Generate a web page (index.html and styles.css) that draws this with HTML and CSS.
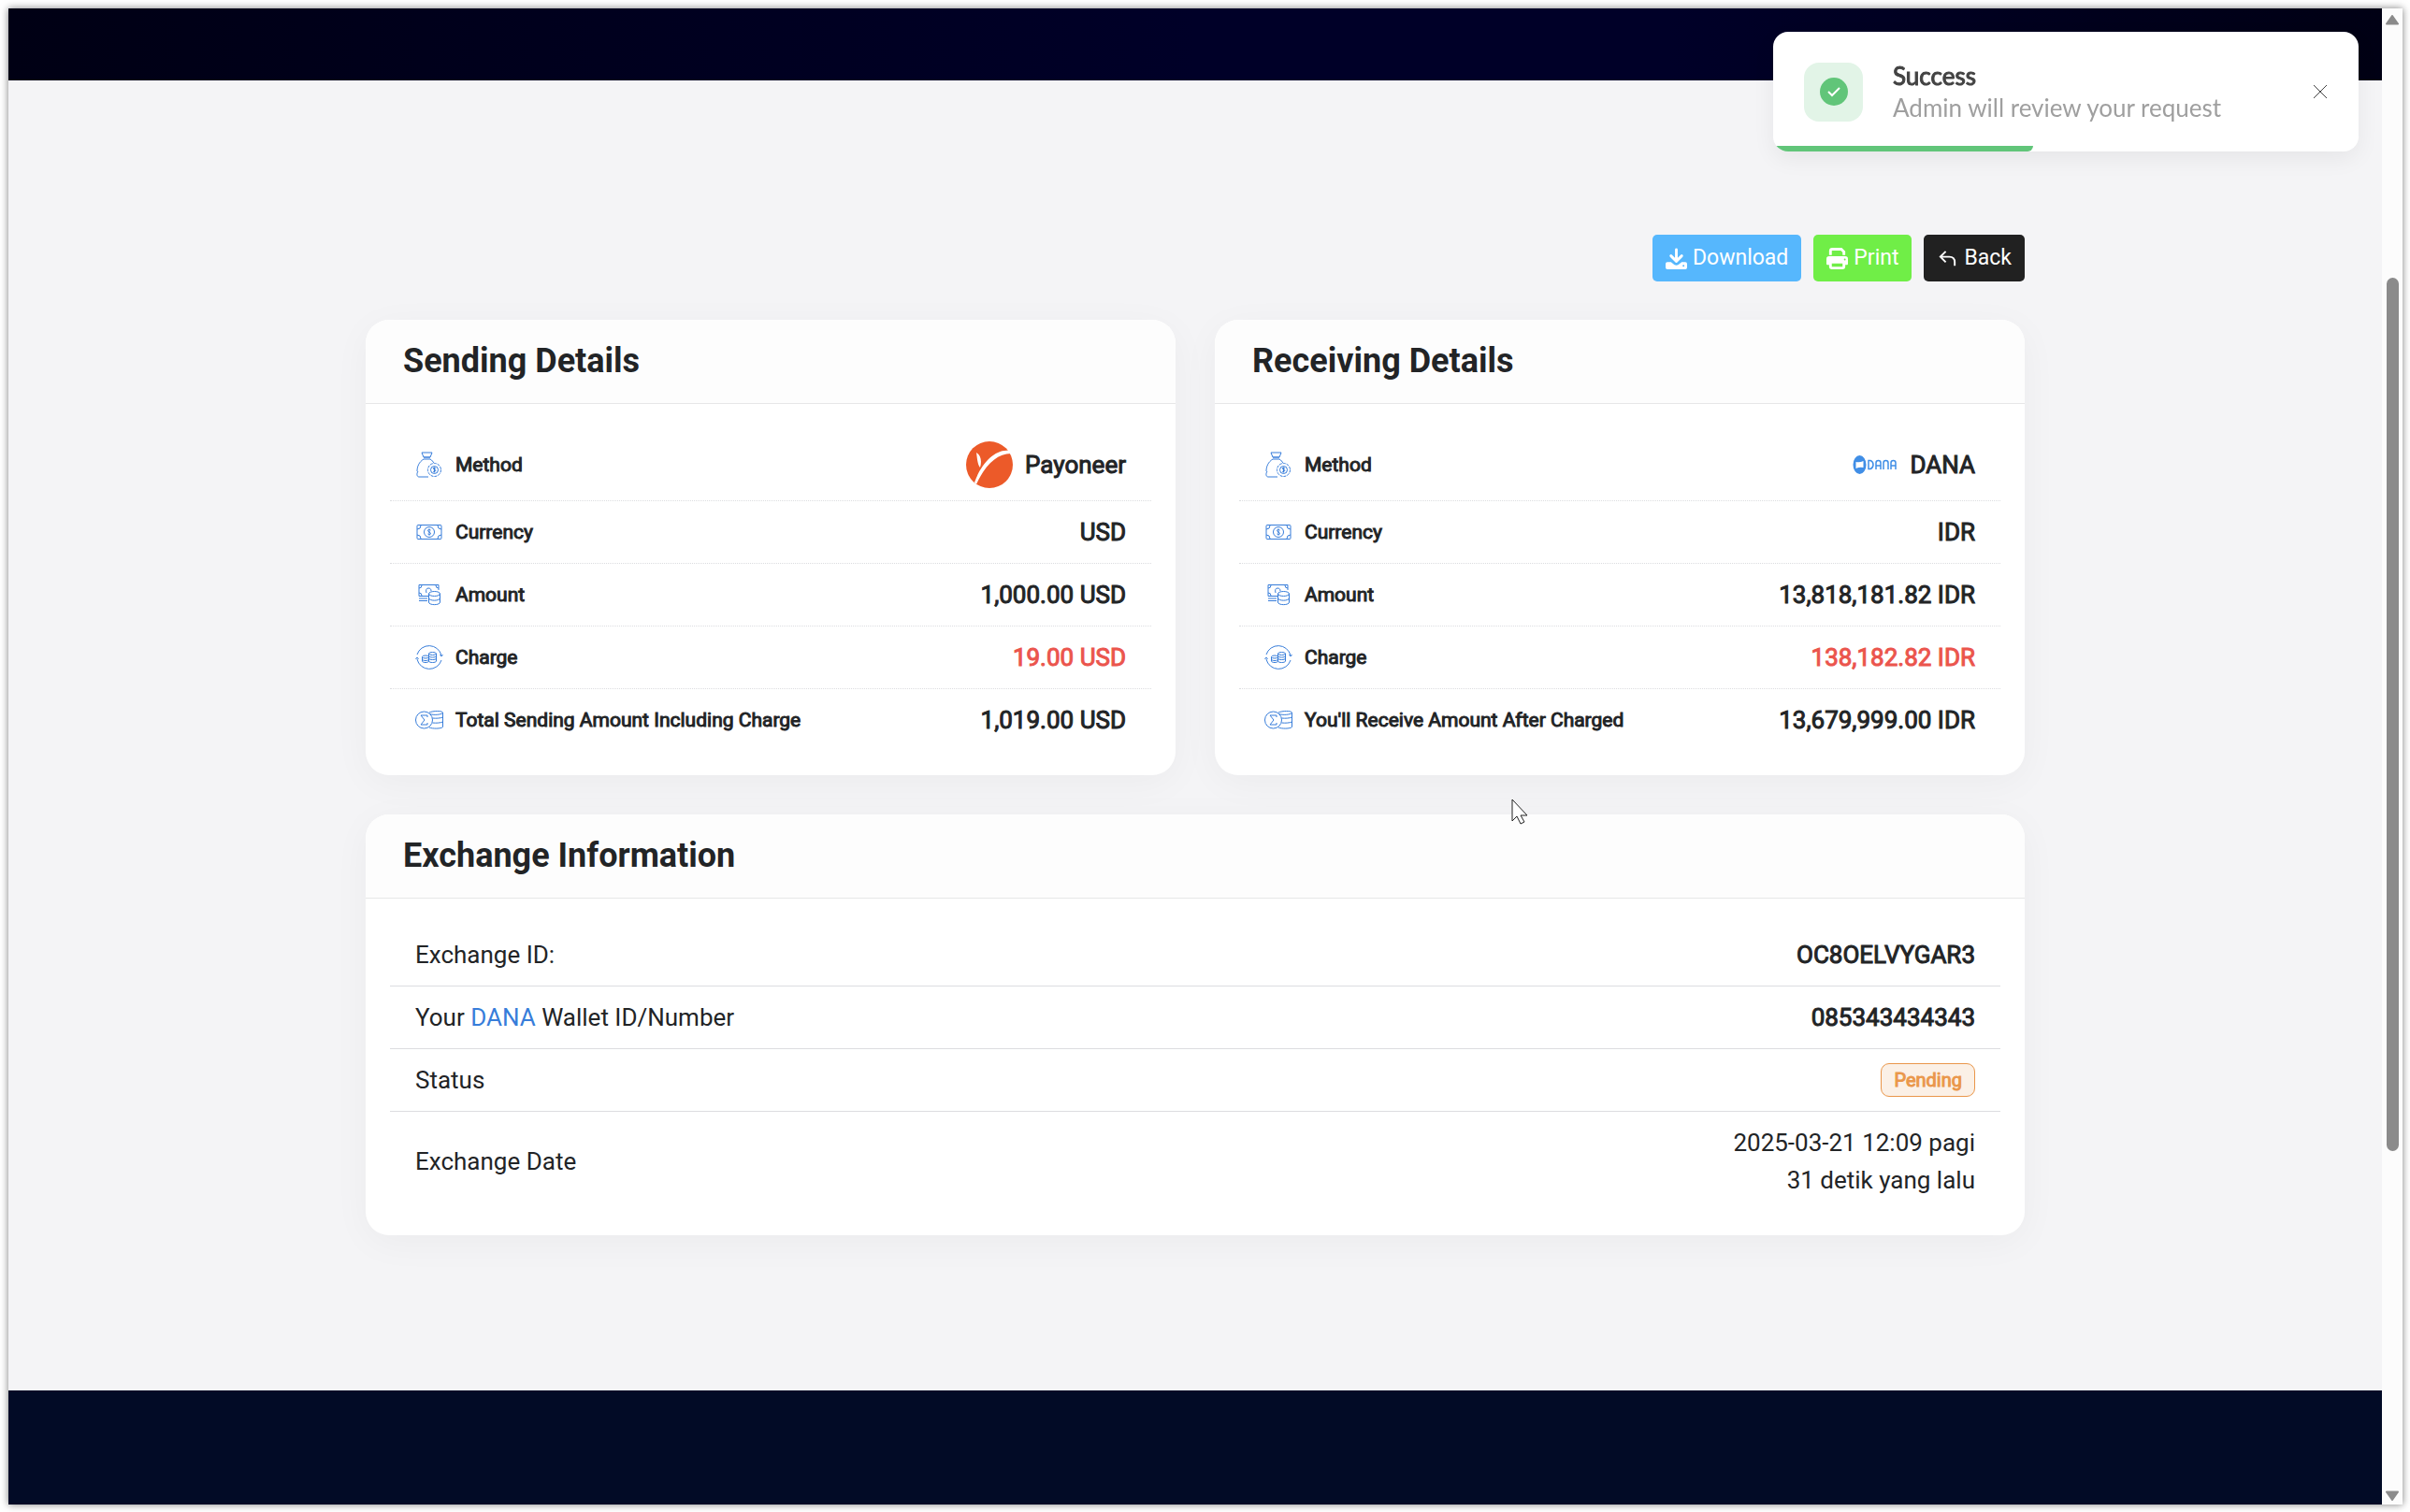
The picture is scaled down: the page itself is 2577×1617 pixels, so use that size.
FILE: index.html
```html
<!DOCTYPE html>
<html lang="en">
<head>
  <meta charset="UTF-8">
  <meta name="viewport" content="width=device-width, initial-scale=1.0">
  <title>Exchange Details</title>
  <link rel="stylesheet" href="styles.css">
</head>
<body>
  <!-- icons shared by both detail cards -->
  <svg class="sprite" aria-hidden="true">
    <symbol id="i-method" viewBox="0 0 30 30">
      <path d="M7 2h11l-2 5H9zM9 7h7M9 9h7M9 9C4 12 2 17 2 22M16 9c2 1 3 3 4 4M3 22c-2 3-1 6 1 6h10"/>
      <circle cx="20.500" cy="20.500" r="7" stroke-dasharray="3 1"/>
      <circle cx="20.500" cy="20.500" r="4"/>
      <path d="M22 19c-1-1-3-1-3 0s3 1 3 2-2 2-3 1M20.500 17.500v6"/>
    </symbol>
    <symbol id="i-currency" viewBox="0 0 30 30">
      <rect x="2" y="7.500" width="26" height="15" rx="1"/>
      <circle cx="15" cy="15" r="5.500"/>
      <path d="M16.500 13c-1-1-3-1-3 .500s3 1.500 3 3-2 1.500-3 .500M15 11.500v7M2 12q4 0 4-4M28 12q-4 0-4-4M2 18q4 0 4 4M28 18q-4 0-4 4"/>
    </symbol>
    <symbol id="i-amount" viewBox="0 0 30 30">
      <path d="M14 16.500H4v-12h21V10M4 8q3 0 3-3M25 8q-3 0-3-3M4 13q3 0 3 3M12 13c-1-3 0-5 2-5s3 1 3 3M4 19h9M4 21.500h9"/>
      <ellipse cx="20.500" cy="14" rx="6" ry="2.500"/>
      <path d="M14.500 14v9c0 3.500 12 3.500 12 0v-9M14.500 18.500c0 3.500 12 3.500 12 0"/>
    </symbol>
    <symbol id="i-charge" viewBox="0 0 30 30">
      <path d="M2 12a13.500 13.500 0 0 1 26 1M28 18a13.500 13.500 0 0 1-26-1M26.500 12l1.500 2 1.500-2M.500 17L2 15l1.500 2"/>
      <ellipse cx="18.500" cy="11" rx="4" ry="1.500"/>
      <path d="M14.500 11v8c0 2 8 2 8 0v-8M14.500 13.500c0 2 8 2 8 0M14.500 16c0 2 8 2 8 0"/>
      <ellipse cx="11" cy="14.500" rx="3.500" ry="1.500"/>
      <path d="M7.500 14.500v4.500c0 2 7 2 7 0M7.500 17c0 2 7 2 7 0"/>
    </symbol>
    <symbol id="i-total" viewBox="0 0 30 30">
      <circle cx="9.500" cy="15" r="9"/>
      <path d="M13 12v-2H6l4 5-4 5h7v-2M15 7c4-2 14-2 14.500 0v15.500c-2 2-11 2-14.500.500M15.500 8.500c4 1.500 12 1 14-1M18.500 13c4 .500 9 0 11-1M18.500 18c4 .500 9 0 11-1"/>
    </symbol>
  </svg>

  <div class="window">
    <div class="page">
      <header class="top-bar"></header>

      <main class="content">
        <div class="container">
          <div class="actions">
            <button class="btn btn-download" type="button">
              <svg class="btn-icon" viewBox="0 0 24 24"><path d="M12 2v12M6 9l6 6 6-6" fill="none" stroke="#fff" stroke-width="3" stroke-linecap="round" stroke-linejoin="round"/><path d="M2 16h4l4 3q2 1 4 0l4-3h4q2 0 2 2v4q0 2-2 2H2q-2 0-2-2v-4q0-2 2-2z" fill="#fff"/><circle cx="20" cy="20" r="1" fill="#56b7fd"/></svg>
              Download
            </button>
            <button class="btn btn-print" type="button">
              <svg class="btn-icon" viewBox="0 0 24 24"><path d="M4.500 8V3.500q0-2 2-2h10l3 3V8" fill="none" stroke="#fff" stroke-width="3"/><path d="M3 9.500h18q3 0 3 3V18q0 1-1 1H1q-1 0-1-1v-5.500q0-3 3-3z" fill="#fff"/><rect x="4.500" y="16" width="15" height="6.500" rx="1" fill="#70ee47" stroke="#fff" stroke-width="3"/><circle cx="20.500" cy="13" r="1" fill="#70ee47"/></svg>
              Print
            </button>
            <a class="btn btn-back" href="#">
              <svg class="btn-icon" viewBox="0 0 24 24"><path d="M10 4L4 10l6 6M4 10h10q6 0 6 6v4" fill="none" stroke="#fff" stroke-width="2"/></svg>
              Back
            </a>
          </div>

          <div class="cards">
            <section class="card">
              <h2 class="card-header">Sending Details</h2>
              <ul class="list list-dotted">
                <li><span class="label"><svg class="icon"><use href="#i-method"/></svg>Method</span>
                  <span class="value value-method">
                    <svg class="logo" viewBox="0 0 50 50"><circle cx="25" cy="25" r="25" fill="#ec5a29"/><path d="M9 44C16 24 31 8 46 10l2 3C33 13 20 26 11 46zM11 12c5 3 6 9 4 16-3-4-3-10-4-16z" fill="#fff"/></svg>
                    Payoneer</span></li>
                <li><span class="label"><svg class="icon"><use href="#i-currency"/></svg>Currency</span><span class="value">USD</span></li>
                <li><span class="label"><svg class="icon"><use href="#i-amount"/></svg>Amount</span><span class="value">1,000.00 USD</span></li>
                <li><span class="label"><svg class="icon"><use href="#i-charge"/></svg>Charge</span><span class="value danger">19.00 USD</span></li>
                <li><span class="label"><svg class="icon"><use href="#i-total"/></svg>Total Sending Amount Including Charge</span><span class="value">1,019.00 USD</span></li>
              </ul>
            </section>

            <section class="card">
              <h2 class="card-header">Receiving Details</h2>
              <ul class="list list-dotted">
                <li><span class="label"><svg class="icon"><use href="#i-method"/></svg>Method</span>
                  <span class="value value-method">
                    <svg class="logo" viewBox="0 0 50 50"><ellipse cx="8.500" cy="25" rx="7" ry="10" fill="#408ee6"/><path d="M4.500 22q4 1 8-1v7q-4-1-8 1z" fill="#fff"/><g fill="none" stroke="#408ee6" stroke-width="1.500"><path d="M18 20.500h2q3 1 3 4.500t-3 4.500h-2zM26 30v-7q0-2.500 2.500-2.500T31 23v7M26 26h5M34 30v-7q0-2.500 2.500-2.500T39 23v7M42 30v-7q0-2.500 2.500-2.500T47 23v7M42 26h5"/></g></svg>
                    DANA</span></li>
                <li><span class="label"><svg class="icon"><use href="#i-currency"/></svg>Currency</span><span class="value">IDR</span></li>
                <li><span class="label"><svg class="icon"><use href="#i-amount"/></svg>Amount</span><span class="value">13,818,181.82 IDR</span></li>
                <li><span class="label"><svg class="icon"><use href="#i-charge"/></svg>Charge</span><span class="value danger">138,182.82 IDR</span></li>
                <li><span class="label"><svg class="icon"><use href="#i-total"/></svg>You'll Receive Amount After Charged</span><span class="value">13,679,999.00 IDR</span></li>
              </ul>
            </section>
          </div>

          <section class="card">
            <h2 class="card-header">Exchange Information</h2>
            <ul class="list">
              <li><span>Exchange ID:</span><span class="value">OC8OELVYGAR3</span></li>
              <li><span>Your <a class="method-link" href="#">DANA</a> Wallet ID/Number</span><span class="value">085343434343</span></li>
              <li><span>Status</span><span class="badge">Pending</span></li>
              <li><span>Exchange Date</span><span class="date">2025-03-21 12:09 pagi<br>31 detik yang lalu</span></li>
            </ul>
          </section>
        </div>
      </main>

      <footer class="footer"></footer>
    </div>

    <div class="scrollbar">
      <svg class="arrow" viewBox="0 0 16 11"><path d="M8 1l6 8.500H2z"/></svg>
      <div class="track"><div class="thumb"></div></div>
      <svg class="arrow" viewBox="0 0 16 11"><path d="M8 10L2 1.500h12z"/></svg>
    </div>
  </div>

  <div class="toast" role="status">
    <span class="toast-icon">
      <svg viewBox="0 0 30 30"><circle cx="15" cy="15" r="15"/><path d="M9 15l4 4 8-8"/></svg>
    </span>
    <div class="toast-text">
      <strong>Success</strong>
      <span>Admin will review your request</span>
    </div>
    <button class="toast-close" type="button" aria-label="Close">
      <svg viewBox="0 0 16 16"><path d="M1 1l14 14M15 1L1 15"/></svg>
    </button>
    <div class="toast-progress"></div>
  </div>

  <svg class="pointer" viewBox="0 0 18 28"><path d="M1 1v23l5-5 4 8 4-2-4-7h7z"/></svg>
</body>
</html>
```

FILE: styles.css
```css
* {
  box-sizing: border-box;
}

body {
  margin: 0;
  padding: 9px 8px 8px 9px;
  min-height: 100vh;
  display: flex;
  font-family: Roboto, sans-serif;
  font-size: 26px;
  line-height: 40px;
  color: #222426;
  background: #fff;
}

.sprite {
  position: absolute;
  width: 0;
  height: 0;
}

.window {
  flex: 1;
  display: flex;
  box-shadow: 0 0 8px rgba(0, 0, 0, 0.5);
}

.page {
  flex: 1;
  display: flex;
  flex-direction: column;
  background: #f4f4f6;
}

.top-bar {
  height: 77px;
  background: linear-gradient(90deg, #000014, #000028 50%, #000028 70%, #000014);
}

.content {
  flex: 1;
  padding: 165px 26px;
}

.container {
  max-width: 1774px;
  margin: 0 auto;
}

.footer {
  height: 122px;
  background: #020b26;
}

/* buttons */
.actions {
  display: flex;
  justify-content: flex-end;
  gap: 13px;
  margin-bottom: 41px;
}

.btn {
  display: flex;
  align-items: center;
  gap: 6px;
  height: 50px;
  padding: 0 14px;
  border: 0;
  border-radius: 5px;
  font: inherit;
  font-size: 23px;
  color: #fff;
  text-decoration: none;
  cursor: pointer;
}

.btn-icon {
  width: 23px;
  height: 23px;
}

.btn-download {
  background: #56b7fd;
}

.btn-print {
  background: #70ee47;
}

.btn-back {
  background: #212121;
}

/* cards */
.cards {
  display: grid;
  grid-template-columns: 1fr 1fr;
  gap: 42px;
  margin-bottom: 42px;
}

.card {
  background: #fff;
  border-radius: 25px;
  box-shadow: 0 8px 40px rgba(0, 0, 0, 0.04);
  overflow: hidden;
}

.card-header {
  margin: 0;
  padding: 24px 40px 25px;
  font-size: 36px;
  line-height: 40px;
  background: #fdfdfd;
  border-bottom: 1px solid #e6e7e8;
}

.list {
  list-style: none;
  margin: 0;
  padding: 27px 26px 26px;
}

.list li {
  display: flex;
  align-items: center;
  justify-content: space-between;
  padding: 13px 27px;
  border-bottom: 1px solid #dcdde0;
}

.list-dotted li {
  border-bottom-style: dotted;
}

.list li:last-child {
  border-bottom: 0;
}

.label {
  display: flex;
  align-items: center;
  gap: 13px;
  font-size: 21px;
  -webkit-text-stroke: 1px;
}

.icon {
  width: 30px;
  height: 30px;
  fill: none;
  stroke: #377dda;
  stroke-width: 1;
}

.value {
  -webkit-text-stroke: 1px;
}

.value-method {
  display: flex;
  align-items: center;
  gap: 13px;
}

.logo {
  width: 50px;
  height: 50px;
}

.danger {
  color: #eb554d;
}

.method-link {
  color: #377dda;
  text-decoration: none;
}

.date {
  text-align: right;
}

.badge {
  height: 36px;
  padding: 0 13px;
  font-size: 20px;
  line-height: 34px;
  color: #ea974b;
  background: #fbf0e6;
  border: 1px solid #ea974b;
  border-radius: 9px;
  -webkit-text-stroke: 1px;
}

/* scrollbar */
.scrollbar {
  width: 22px;
  display: flex;
  flex-direction: column;
  align-items: center;
  padding: 7px 0 4px;
  background: #fcfcfc;
}

.arrow {
  width: 16px;
  height: 11px;
  fill: #8b8b8b;
  stroke: #8b8b8b;
  stroke-width: 2;
  stroke-linejoin: round;
}

.track {
  flex: 1;
  padding-top: 270px;
}

.thumb {
  width: 13px;
  height: 72%;
  border-radius: 7px;
  background: #8b8b8b;
}

/* toast */
.toast {
  position: fixed;
  top: 34px;
  right: 55px;
  width: 626px;
  height: 128px;
  display: flex;
  align-items: center;
  gap: 32px;
  padding: 0 21px 0 33px;
  font-family: Lato, sans-serif;
  border-radius: 16px;
  background: #fff;
  box-shadow: 0 8px 24px rgba(0, 0, 0, 0.06);
  overflow: hidden;
}

.toast-icon {
  width: 63px;
  height: 63px;
  display: grid;
  place-items: center;
  border-radius: 16px;
  background: #e2f4e7;
}

.toast-icon svg {
  width: 30px;
  height: 30px;
  fill: #61c579;
}

.toast-icon path {
  fill: none;
  stroke: #fff;
  stroke-width: 2;
}

.toast-text {
  flex: 1;
  display: flex;
  flex-direction: column;
  line-height: 34px;
  color: #9f9f9f;
}

.toast-text strong {
  font-weight: 400;
  color: #434343;
  -webkit-text-stroke: 1px;
}

.toast-close {
  display: flex;
  padding: 12px;
  border: 0;
  background: none;
  cursor: pointer;
}

.toast-close svg {
  width: 16px;
  height: 16px;
  stroke: #444;
  stroke-width: 1;
}

.toast-progress {
  position: absolute;
  left: 0;
  bottom: 0;
  width: 278px;
  height: 6px;
  border-radius: 0 0 6px 0;
  background: #61c579;
}

.pointer {
  position: absolute;
  left: 1616px;
  top: 854px;
  width: 18px;
  height: 28px;
  fill: #fff;
  stroke: #222;
}
```
